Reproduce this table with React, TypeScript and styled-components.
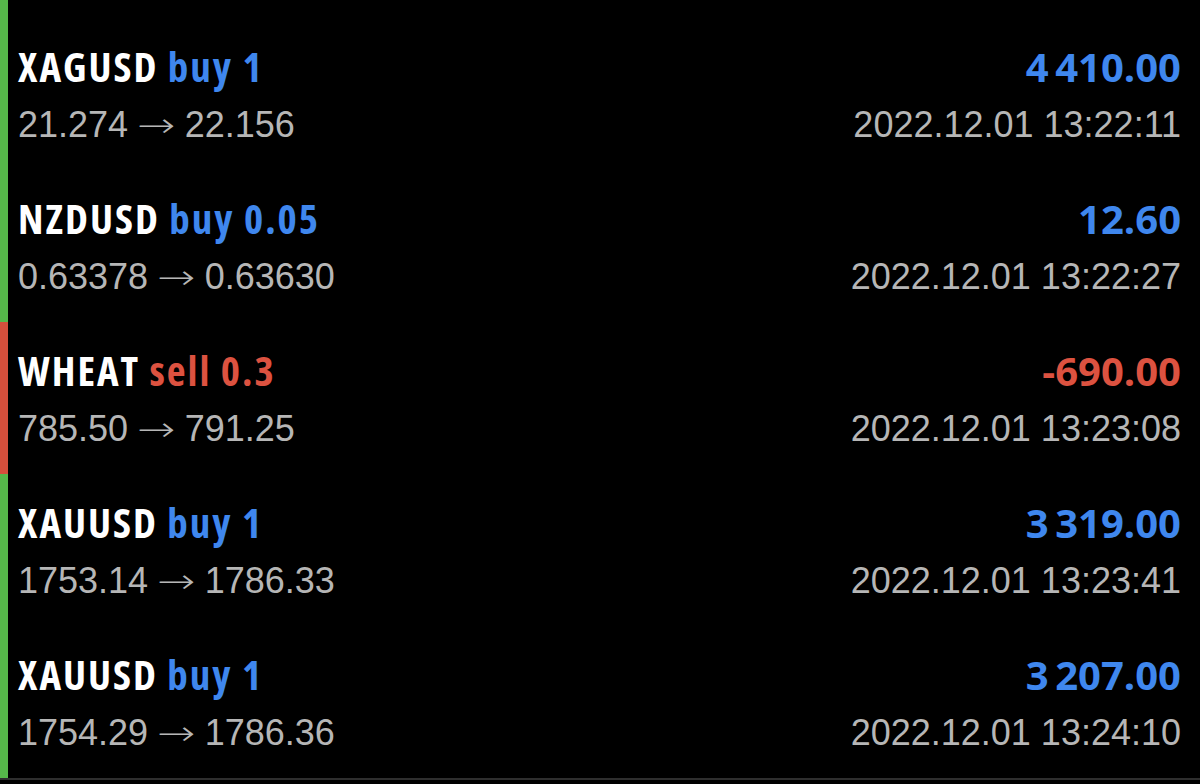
import styled, { createGlobalStyle } from 'styled-components'

type Side = 'buy' | 'sell'

interface Deal {
  symbol: string
  side: Side
  volume: string
  open: string
  close: string
  profit: string
  time: string
}

const deals: Deal[] = [
  { symbol: 'XAGUSD', side: 'buy', volume: '1', open: '21.274', close: '22.156', profit: '4\u2009410.00', time: '2022.12.01 13:22:11' },
  { symbol: 'NZDUSD', side: 'buy', volume: '0.05', open: '0.63378', close: '0.63630', profit: '12.60', time: '2022.12.01 13:22:27' },
  { symbol: 'WHEAT', side: 'sell', volume: '0.3', open: '785.50', close: '791.25', profit: '-690.00', time: '2022.12.01 13:23:08' },
  { symbol: 'XAUUSD', side: 'buy', volume: '1', open: '1753.14', close: '1786.33', profit: '3\u2009319.00', time: '2022.12.01 13:23:41' },
  { symbol: 'XAUUSD', side: 'buy', volume: '1', open: '1754.29', close: '1786.36', profit: '3\u2009207.00', time: '2022.12.01 13:24:10' },
]

const GlobalStyle = createGlobalStyle`
  html, body {
    margin: 0;
    padding: 0;
    background: #000;
  }
  body {
    font-family: 'Liberation Sans', Arial, sans-serif;
    -webkit-font-smoothing: antialiased;
  }
`

const sideColor = (side: Side) => (side === 'buy' ? '#3f87ee' : '#dc5240')
const barColor = (side: Side) => (side === 'buy' ? '#56b84a' : '#d64f3c')

const Screen = styled.div`
  width: 1200px;
  height: 784px;
  overflow: hidden;
  background: #000;
  display: flex;
  flex-direction: column;
`

const List = styled.div`
  display: flex;
  flex-direction: column;
  border-bottom: 2px solid #2e2e2e;
`

interface SideProps {
  $side: Side
}

/* tail of the row scrolled off above */
const Stub = styled.div<SideProps>`
  height: 18px;
  border-left: 8px solid ${({ $side }) => barColor($side)};
`

const Row = styled.div<SideProps>`
  height: 152px;
  box-sizing: border-box;
  padding: 24px 19px 0 18px;
  position: relative;
  display: flex;
  flex-direction: column;
  gap: 12px;

  &::before {
    content: '';
    position: absolute;
    left: 0;
    top: 0;
    bottom: 0;
    width: 8px;
    background: ${({ $side }) => barColor($side)};
  }
`

const Line = styled.div`
  display: flex;
  justify-content: space-between;
  align-items: baseline;
  white-space: nowrap;
`

const Title = styled.div`
  font-family: 'Open Sans', 'Noto Sans', sans-serif;
  font-stretch: 75%;
  font-weight: 700;
  font-size: 41px;
  line-height: 48px;
  letter-spacing: 2px;
  color: #fff;
`

const Trade = styled.span<SideProps>`
  color: ${({ $side }) => sideColor($side)};
`

const Profit = styled.div<SideProps>`
  font-family: 'Open Sans', 'Noto Sans', sans-serif;
  font-stretch: 88%;
  font-weight: 700;
  font-size: 40px;
  line-height: 48px;
  color: ${({ $side }) => sideColor($side)};
`

const Meta = styled.div`
  font-family: 'Liberation Sans', Arial, sans-serif;
  font-size: 36px;
  line-height: 44px;
  color: #b6b6b6;
`

const Arrow = styled.span`
  display: inline-block;
  font-family: 'DejaVu Sans', sans-serif;
  font-weight: 200;
  font-size: 34px;
  margin: 0 4px;
  transform: scaleX(1.35);
`

export default function App() {
  return (
    <Screen>
      <GlobalStyle />
      <Stub $side="buy" />
      <List>
        {deals.map((d, i) => (
          <Row key={i} $side={d.side}>
            <Line>
              <Title>
                {d.symbol}{' '}
                <Trade $side={d.side}>
                  {d.side} {d.volume}
                </Trade>
              </Title>
              <Profit $side={d.side}>{d.profit}</Profit>
            </Line>
            <Line>
              <Meta>
                {d.open} <Arrow>→</Arrow> {d.close}
              </Meta>
              <Meta>{d.time}</Meta>
            </Line>
          </Row>
        ))}
      </List>
    </Screen>
  )
}
